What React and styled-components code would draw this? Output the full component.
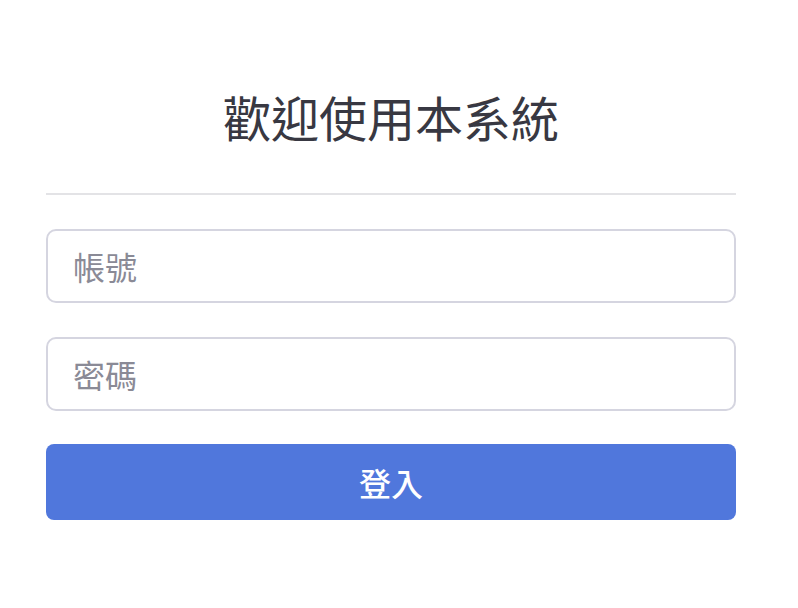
import styled, { createGlobalStyle } from "styled-components";

const GlobalStyle = createGlobalStyle`
  body {
    margin: 0;
    background: #ffffff;
    font-family: "Noto Sans CJK TC", "Noto Sans", sans-serif;
  }
`;

export default function App() {
  return (
    <>
      <GlobalStyle />
      <Page>
        <Header>
          <Title>歡迎使用本系統</Title>
        </Header>
        <Form onSubmit={(e) => e.preventDefault()}>
          <Field type="text" placeholder="帳號" />
          <Field type="password" placeholder="密碼" />
          <SubmitButton type="submit">登入</SubmitButton>
        </Form>
      </Page>
    </>
  );
}

const Page = styled.div`
  width: 690px;
  padding: 80px 0 0 46px;
`;

const Header = styled.div`
  padding-bottom: 41px;
  border-bottom: 2px solid #e3e3e6;
`;

const Title = styled.h1`
  margin: 0;
  font-size: 48px;
  line-height: 72px;
  font-weight: 400;
  color: #383842;
  text-align: center;
`;

const Form = styled.form`
  display: flex;
  flex-direction: column;
  gap: 34px;
  margin-top: 34px;
`;

const Field = styled.input`
  box-sizing: border-box;
  height: 74px;
  width: 100%;
  padding: 0 25px;
  border: 2px solid #d5d5e0;
  border-radius: 10px;
  font-family: inherit;
  font-size: 32px;
  color: #383842;
  outline: none;

  &::placeholder {
    color: #8a8a96;
  }
`;

const SubmitButton = styled.button`
  height: 76px;
  margin-top: -1px;
  border: none;
  border-radius: 8px;
  background: #5077dc;
  color: #ffffff;
  font-family: inherit;
  font-size: 32px;
  font-weight: 500;
  cursor: pointer;
`;
